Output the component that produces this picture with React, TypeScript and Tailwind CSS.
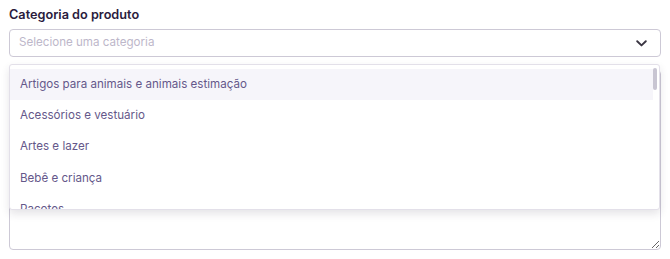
import React from 'react';

const categories = [
  'Artigos para animais e animais estimação',
  'Acessórios e vestuário',
  'Artes e lazer',
  'Bebê e criança',
  'Pacotes',
  'Câmeras e óptica',
];

export default function App() {
  return (
    <div className="w-[670px] h-[259px] bg-white font-['Inter',sans-serif] px-[9px] pt-[6px]">
      <label className="block text-[12.7px] font-semibold text-[#2a1b3d] leading-[18px] mb-[5px]">
        Categoria do produto
      </label>

      <div className="relative">
        {/* Select */}
        <div className="h-[28px] rounded-[4px] border border-[#cdc9d6] flex items-center justify-between pl-[9px] pr-[13px]">
          <span className="text-[11.6px] text-[#bdb7ca]">Selecione uma categoria</span>
          <svg width="11" height="7" viewBox="0 0 11 7" fill="none">
            <path d="M1.2 1.2 5.5 5.4 9.8 1.2" stroke="#3a3542" strokeWidth="1.9" strokeLinecap="round" strokeLinejoin="round" />
          </svg>
        </div>

        {/* Textarea underneath */}
        <textarea className="block w-full h-[180px] mt-[13px] rounded-[4px] border border-[#cdc9d6] bg-white resize-y outline-none" />

        {/* Dropdown menu */}
        <div className="absolute left-0 top-[35px] w-[651px] h-[146px] bg-white border border-[#e3e0e9] rounded-[3px] shadow-[0_4px_8px_rgba(40,30,60,0.12)] overflow-hidden">
          <div className="absolute right-[2px] top-[3px] w-[4px] h-[22px] rounded-full bg-[#c8c5d2]" />
          <div className="pt-[4px] pr-[6px]">
            {categories.map((c, i) => (
              <div
                key={c}
                className={`h-[31.25px] flex items-center pl-[10px] text-[11.6px] text-[#65588a] ${i === 0 ? 'bg-[#f6f5fa]' : ''}`}
              >
                {c}
              </div>
            ))}
          </div>
        </div>
      </div>
    </div>
  );
}
